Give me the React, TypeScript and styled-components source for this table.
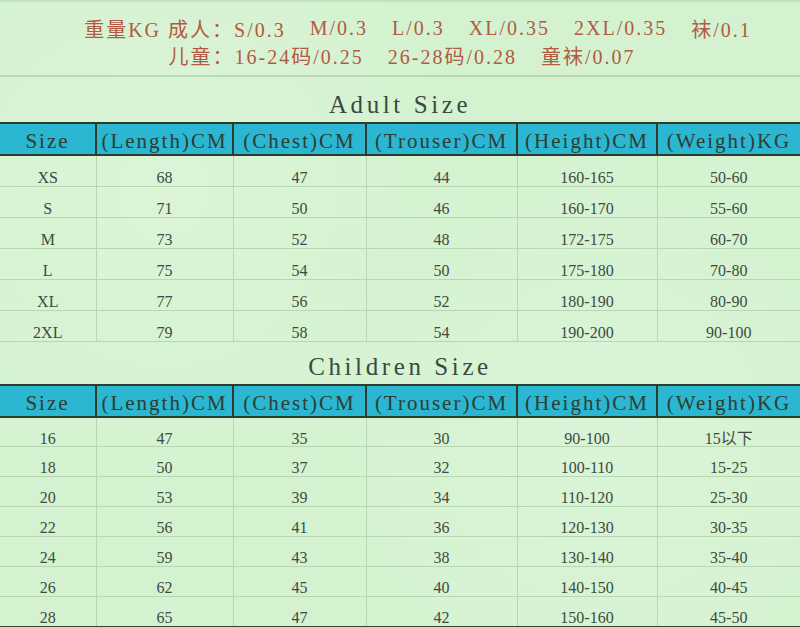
import styled, { createGlobalStyle } from "styled-components";

const GlobalStyle = createGlobalStyle`
    html, body {
        margin: 0;
        padding: 0;
        background: #d4f2d0;
    }
`

const Page = styled.div`
    width: 800px;
    height: 627px;
    overflow: hidden;
    background-color: #d4f2d0;
    background-image:
        radial-gradient(circle at 20% 30%, rgba(255,255,255,0.18) 0, transparent 40%),
        radial-gradient(circle at 75% 70%, rgba(255,255,255,0.15) 0, transparent 45%);
    border-top: 2px solid #c2e2bd;
    box-sizing: border-box;
    font-family: "Liberation Serif", "Noto Sans CJK SC", serif;
`

const Notes = styled.div`
    height: 75px;
    border-bottom: 2px solid #bcd9b7;
    display: flex;
    flex-direction: column;
    align-items: center;
    padding-top: 13px;
    box-sizing: border-box;
`

const NoteLine = styled.div<{ $shift: number }>`
    display: flex;
    gap: 24px;
    height: 27px;
    align-items: center;
    margin-left: ${p => p.$shift}px;
    color: #b25a42;
    font-family: "Liberation Serif", "Noto Sans CJK SC", serif;
    font-size: 20px;
    letter-spacing: 2px;
    white-space: nowrap;
`

const Title = styled.h2<{ $height: number }>`
    margin: 0;
    height: ${p => p.$height}px;
    display: flex;
    align-items: flex-end;
    justify-content: center;
    padding-bottom: 3px;
    box-sizing: border-box;
    font-family: "Liberation Serif", serif;
    font-weight: 400;
    font-size: 25px;
    letter-spacing: 3.6px;
    color: #3a4a3e;
`

const Table = styled.table`
    width: 800px;
    border-collapse: collapse;
    table-layout: fixed;
`

const HeadCell = styled.th`
    height: 32px;
    padding: 5px 0 0;
    box-sizing: border-box;
    background: #2bb6d1;
    border: 2px solid #2c3d2c;
    border-left-width: 0;
    font-family: "Liberation Serif", serif;
    font-weight: 400;
    font-size: 21px;
    letter-spacing: 2px;
    color: #2d3e32;
    text-align: center;
    white-space: nowrap;
    &:last-child {
        border-right-width: 0;
    }
`

const Cell = styled.td<{ $height: number; $last?: boolean }>`
    height: ${p => p.$height}px;
    padding: ${p => p.$height - 16}px 0 0;
    box-sizing: border-box;
    vertical-align: top;
    line-height: 14px;
    border-right: 1px solid #b7d6b2;
    border-bottom: ${p => p.$last ? "2px solid #2f4a33" : "1px solid #b7d6b2"};
    font-family: "Liberation Serif", "Noto Sans CJK SC", serif;
    font-size: 16px;
    color: #3c4c3f;
    text-align: center;
    white-space: nowrap;
    &:last-child {
        border-right: none;
    }
`

const widths = [96, 137, 133, 151, 140, 143];
const heads = ["Size", "(Length)CM", "(Chest)CM", "(Trouser)CM", "(Height)CM", "(Weight)KG"];

const adult = [
    ["XS", "68", "47", "44", "160-165", "50-60"],
    ["S", "71", "50", "46", "160-170", "55-60"],
    ["M", "73", "52", "48", "172-175", "60-70"],
    ["L", "75", "54", "50", "175-180", "70-80"],
    ["XL", "77", "56", "52", "180-190", "80-90"],
    ["2XL", "79", "58", "54", "190-200", "90-100"],
];

const children = [
    ["16", "47", "35", "30", "90-100", "15以下"],
    ["18", "50", "37", "32", "100-110", "15-25"],
    ["20", "53", "39", "34", "110-120", "25-30"],
    ["22", "56", "41", "36", "120-130", "30-35"],
    ["24", "59", "43", "38", "130-140", "35-40"],
    ["26", "62", "45", "40", "140-150", "40-45"],
    ["28", "65", "47", "42", "150-160", "45-50"],
];

const SizeTable = ({ rows, rowHeight, closed }: { rows: string[][]; rowHeight: number; closed?: boolean }) => (
    <Table>
        <colgroup>
            {widths.map((w, i) => <col key={i} style={{ width: w }} />)}
        </colgroup>
        <thead>
            <tr>
                {heads.map(h => <HeadCell key={h}>{h}</HeadCell>)}
            </tr>
        </thead>
        <tbody>
            {rows.map((r, i) => (
                <tr key={i}>
                    {r.map((v, j) => (
                        <Cell key={j} $height={rowHeight} $last={closed && i === rows.length - 1}>{v}</Cell>
                    ))}
                </tr>
            ))}
        </tbody>
    </Table>
);

const App = () => {
    return (
        <Page>
            <GlobalStyle />
            <Notes>
                <NoteLine $shift={36}>
                    <span>重量KG 成人：S/0.3</span>
                    <span>M/0.3</span>
                    <span>L/0.3</span>
                    <span>XL/0.35</span>
                    <span>2XL/0.35</span>
                    <span>袜/0.1</span>
                </NoteLine>
                <NoteLine $shift={4}>
                    <span>儿童：16-24码/0.25</span>
                    <span>26-28码/0.28</span>
                    <span>童袜/0.07</span>
                </NoteLine>
            </Notes>
            <Title $height={45}>Adult Size</Title>
            <SizeTable rows={adult} rowHeight={31} />
            <Title $height={42}>Children Size</Title>
            <SizeTable rows={children} rowHeight={30} closed />
        </Page>
    );
}

export default App;
